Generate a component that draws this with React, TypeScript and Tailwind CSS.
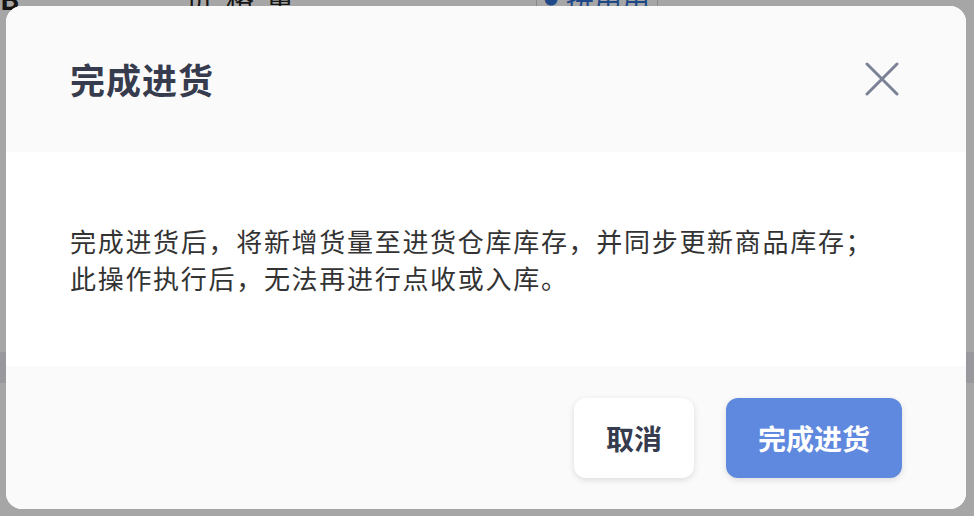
import React from 'react';

const FONT = { fontFamily: '"Noto Sans CJK SC", "Noto Sans", sans-serif' };

function CloseIcon() {
  return (
    <svg width="34" height="34" viewBox="0 0 34 34" fill="none" className="text-[#7b8296]">
      <path d="M2 2L32 32M32 2L2 32" stroke="currentColor" strokeWidth="3" strokeLinecap="round" />
    </svg>
  );
}

export default function App() {
  return (
    <div className="relative h-[516px] w-[974px] overflow-hidden bg-white" style={FONT}>
      {/* page behind the dialog */}
      <div className="flex h-full flex-col">
        <div className="-mt-[22px] flex h-[40px] items-center text-[28px] text-[#222]">
          <span className="w-[186px] font-semibold">B</span>
          <span className="tracking-[12px]">价格量</span>
          <div className="ml-[230px] flex h-[40px] w-[122px] items-center justify-center rounded border border-[#cfd3dc] text-[#2f6fd0]">
            <span className="mr-2 text-[14px]">●</span>拼用用
          </div>
        </div>
        <div className="mt-[334px] h-[31px] bg-[#ececf1]" />
      </div>
      <div className="absolute inset-0 bg-black/35" />

      {/* dialog */}
      <div className="absolute left-[6px] top-[6px] flex h-[503px] w-[960px] flex-col overflow-hidden rounded-2xl bg-white">
        <div className="flex h-[146px] shrink-0 items-center justify-between bg-[#fafafa] pl-[64px] pr-[67px]">
          <h2 className="text-[35px] font-bold tracking-[1px] text-[#363b4d]">完成进货</h2>
          <CloseIcon />
        </div>
        <div className="flex h-[214px] shrink-0 flex-col justify-center px-[64px] text-[26px] leading-[37.5px] tracking-[1.7px] text-[#333]">
          <p>完成进货后，将新增货量至进货仓库库存，并同步更新商品库存；</p>
          <p>此操作执行后，无法再进行点收或入库。</p>
        </div>
        <div className="flex flex-1 items-center justify-end gap-[32px] bg-[#fafafa] pr-[64px]">
          <button className="h-[80px] w-[120px] rounded-xl bg-white text-[28px] font-bold text-[#363b4d] shadow-[0_2px_6px_rgba(0,0,0,0.12)]">
            取消
          </button>
          <button className="h-[80px] w-[176px] rounded-xl bg-[#5f89de] text-[28px] font-bold text-white shadow-[0_2px_6px_rgba(0,0,0,0.12)]">
            完成进货
          </button>
        </div>
      </div>
    </div>
  );
}
